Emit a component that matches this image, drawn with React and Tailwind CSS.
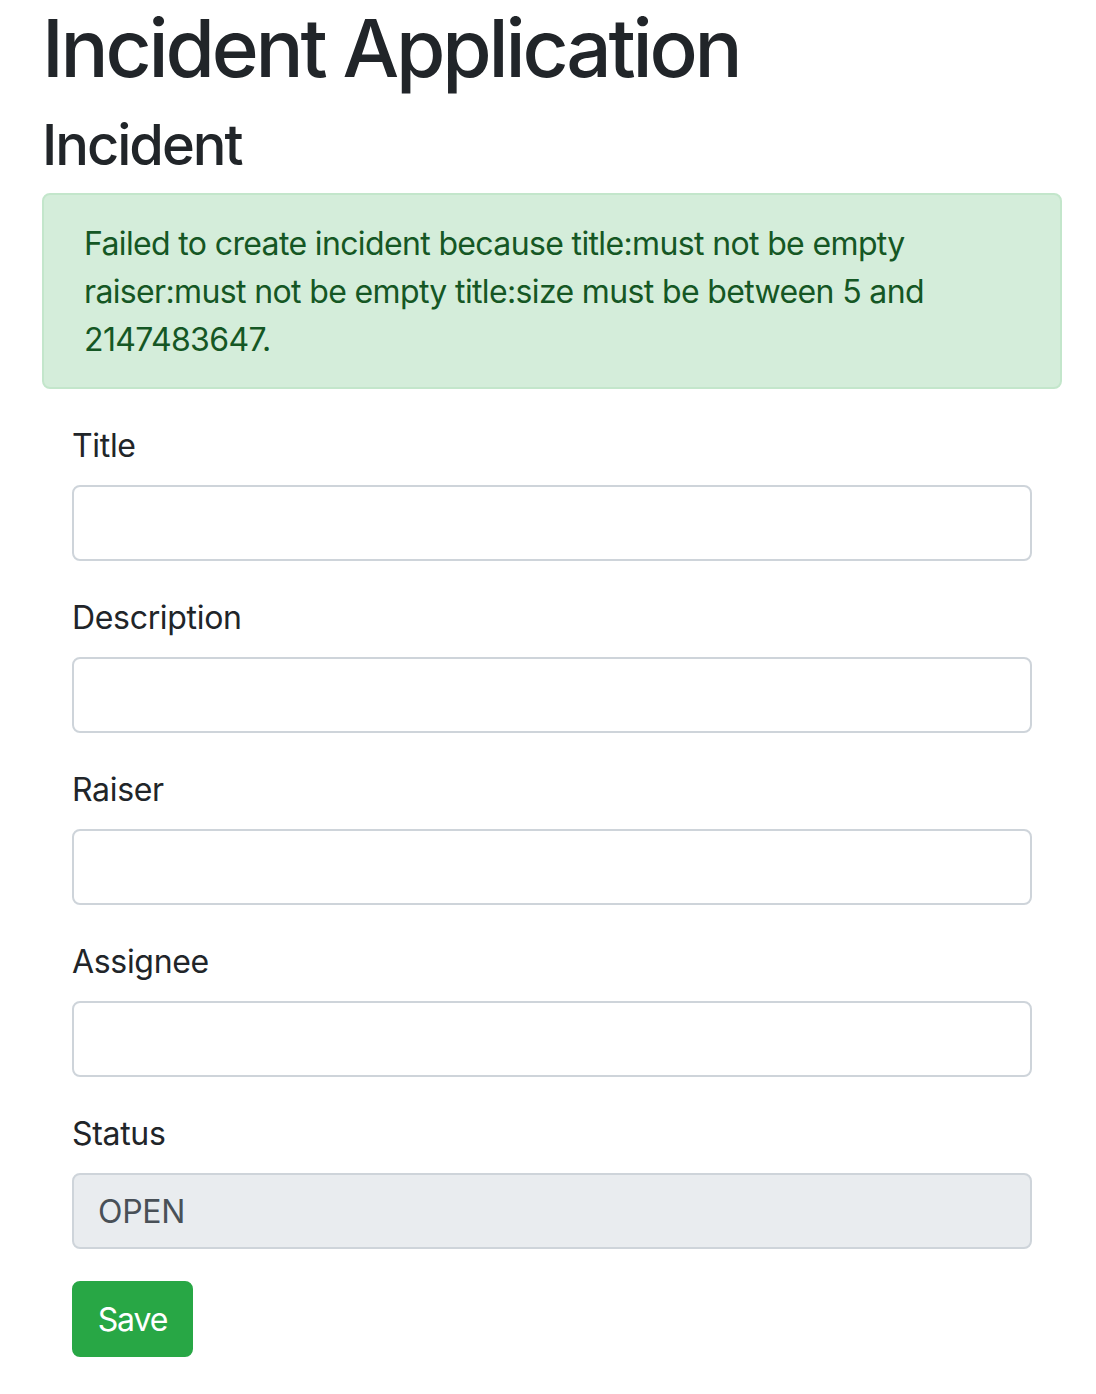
export default function App() {
  const fields = ["Title", "Description", "Raiser", "Assignee"];
  return (
    <div className="min-h-[1394px] bg-white pl-[42px] pr-[34px] text-[#212529]" style={{ fontFamily: "Inter, 'Liberation Sans', sans-serif" }}>
      <h1 className="m-0 text-[80px] leading-[1.2] font-medium tracking-[-0.04em] mb-[16px]">Incident Application</h1>
      <h3 className="m-0 text-[56px] leading-[1.2] font-medium tracking-[-0.036em] mb-[14px]">Incident</h3>
      <div className="rounded-[8px] border-2 border-[#c3e6cb] bg-[#d4edda] px-[40px] pt-[25px] pb-[23px] text-[32px] leading-[48px] tracking-[-0.02em] text-[#155724] mb-[32px]">
        Failed to create incident because title:must not be empty
        <br />
        raiser:must not be empty title:size must be between 5 and
        <br />
        2147483647.
      </div>
      <form className="px-[30px] tracking-[-0.02em]" onSubmit={(e) => e.preventDefault()}>
        {fields.map((f) => (
          <div key={f} className="mb-[32px]">
            <label className="block text-[32px] leading-[48px] mb-[16px] pt-[1px] h-[48px]">{f}</label>
            <input type="text" className="block w-full h-[76px] rounded-[8px] border-2 border-[#ced4da] bg-white px-[24px] text-[32px] text-[#495057] outline-none" />
          </div>
        ))}
        <div className="mb-[32px]">
          <label className="block text-[32px] leading-[48px] mb-[16px] pt-[1px] h-[48px]">Status</label>
          <input type="text" readOnly value="OPEN" className="block w-full h-[76px] rounded-[8px] border-2 border-[#ced4da] bg-[#e9ecef] px-[24px] text-[32px] text-[#495057] tracking-[-0.01em] outline-none" />
        </div>
        <button type="submit" className="h-[76px] w-[121px] rounded-[8px] border-2 border-[#28a745] bg-[#28a745] pt-[2px] text-center text-[32px] leading-[48px] tracking-[-0.035em] text-white">Save</button>
      </form>
    </div>
  );
}
